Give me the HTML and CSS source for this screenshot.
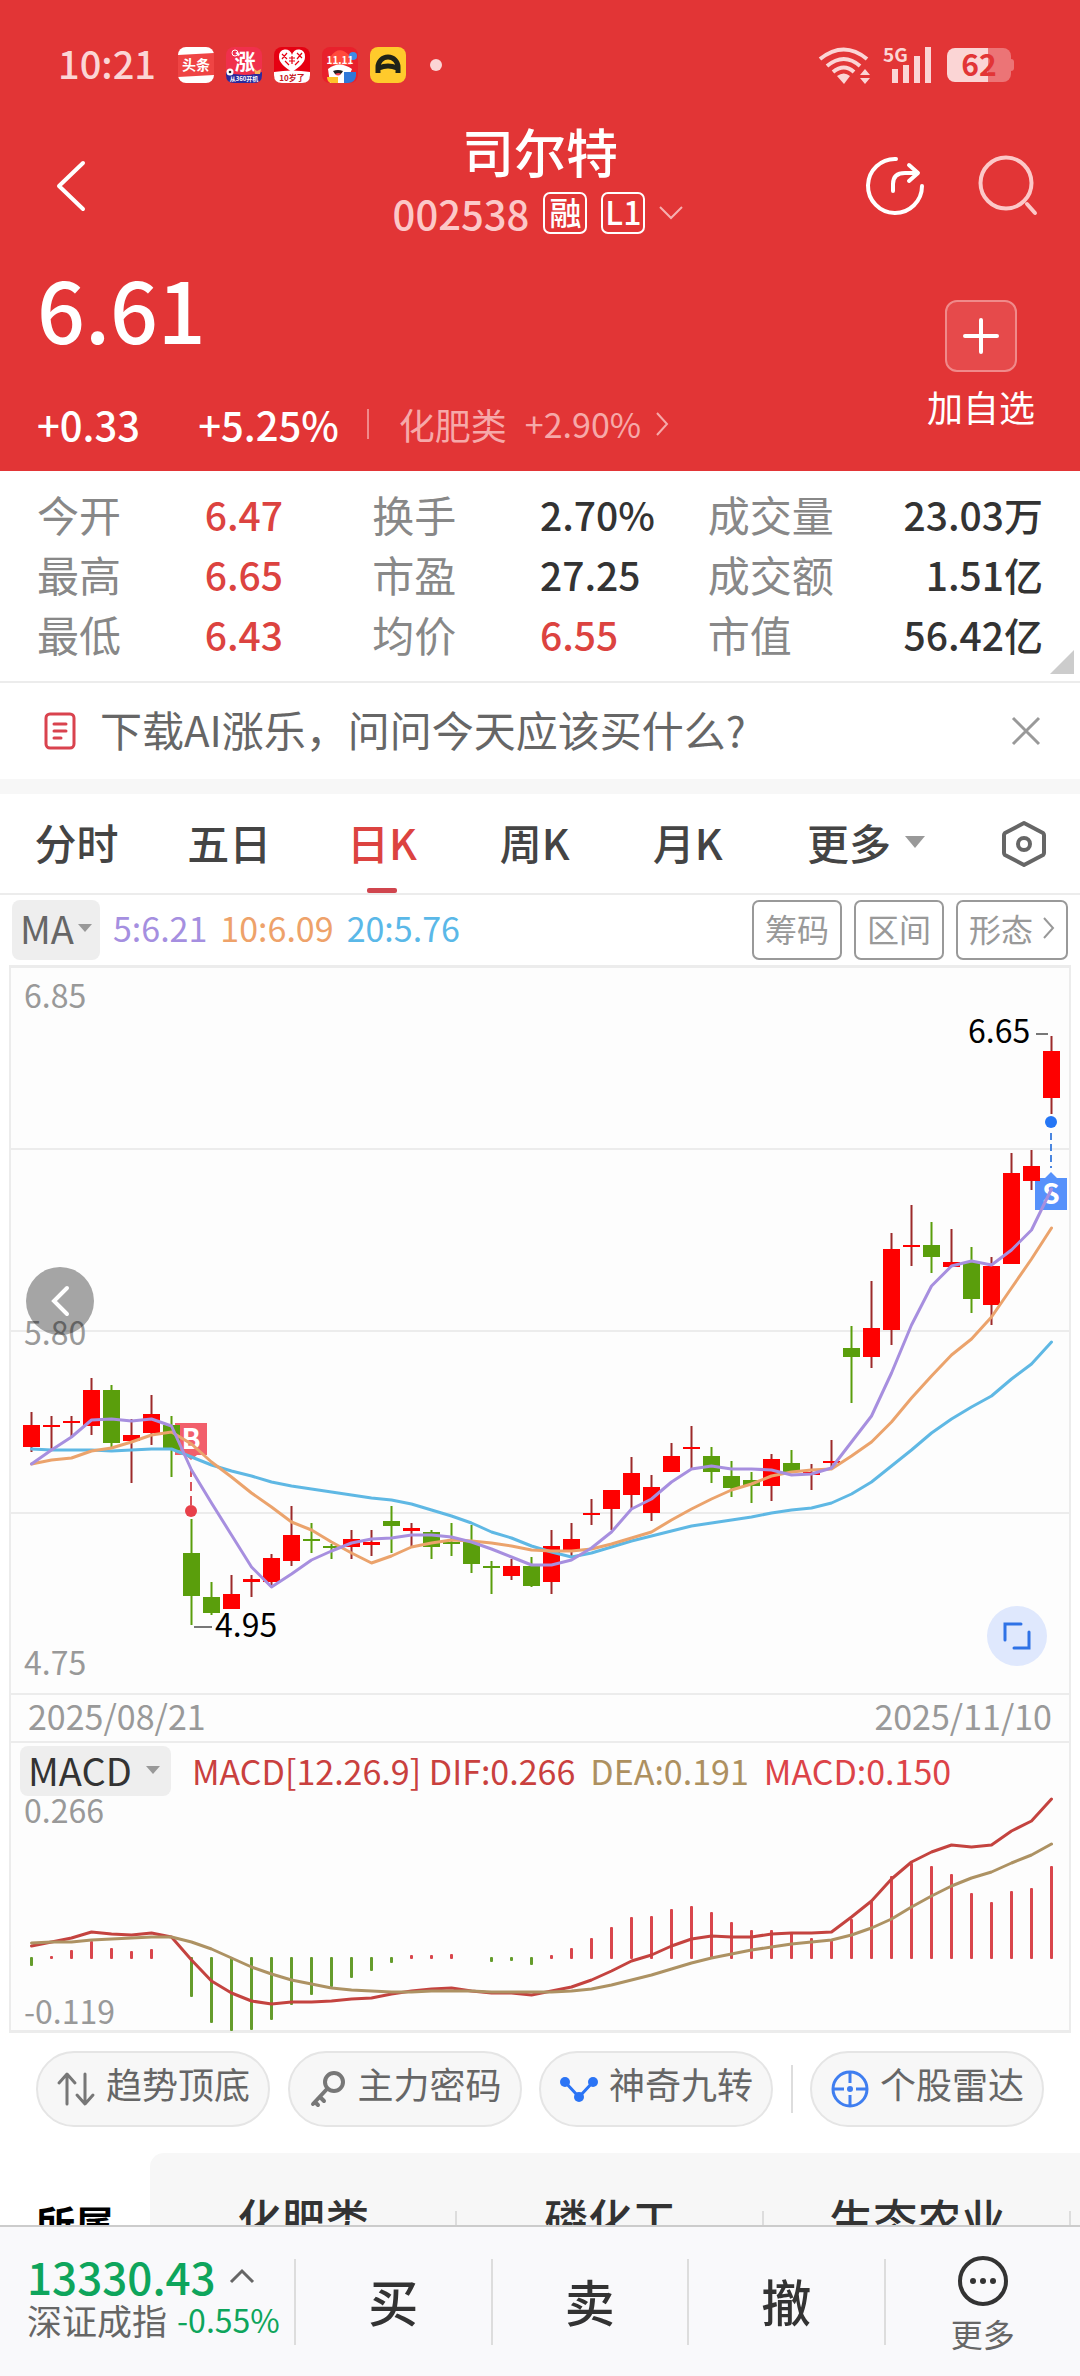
FILE: index.html
```html
<!DOCTYPE html>
<html lang="zh-CN">
<head>
    <meta charset="UTF-8">
    <meta name="viewport" content="width=device-width, initial-scale=1.0">
    <title>司尔特 002538</title>
    <link rel="stylesheet" href="styles.css">
</head>
<body>
    <div class="content">
        <header class="hero">
            <div class="status">
                <span class="time">10:21</span>
                <svg class="app" viewBox="0 0 36 36">
                    <rect width="36" height="36" rx="8" fill="#fff"/>
                    <path d="M0 8L36 6V28L0 30Z" fill="#ef4444"/>
                    <text x="18" y="23" font-size="14" font-weight="700" fill="#fff" text-anchor="middle">头条</text>
                </svg>
                <svg class="app" viewBox="0 0 36 36">
                    <rect width="36" height="36" rx="8" fill="#f0304c"/>
                    <path d="M0 25Q18 31 36 25V28Q36 36 28 36H8Q0 36 0 28Z" fill="#2b2a9c"/>
                    <text x="19" y="22" font-size="21" font-weight="700" fill="#fff" text-anchor="middle">涨</text>
                    <circle cx="9" cy="6" r="3" fill="none" stroke="#fff"/>
                    <circle cx="4" cy="25" r="3.500" fill="#fff"/>
                    <circle cx="4" cy="25" r="1.300" fill="#222"/>
                    <path d="M28 22l3 2 4-2-1 5h-5z" fill="#f8b25a"/>
                    <text x="18" y="34" font-size="6" font-weight="700" fill="#fff" text-anchor="middle">从360开机</text>
                </svg>
                <svg class="app" viewBox="0 0 36 36">
                    <rect width="36" height="36" rx="8" fill="#e60012"/>
                    <path d="M0 25Q18 22 36 25V28Q36 36 28 36H8Q0 36 0 28Z" fill="#fff"/>
                    <path d="M18 25C11 20 5 16 5 10a6 6 0 0 1 13-2a6 6 0 0 1 13 2C31 16 25 20 18 25Z" fill="#fff"/>
                    <path d="M8 7l5 5M13 6l-5 6M23 6l5 5M28 6l-5 6M11 14l4 4M25 14l-4 4M15 11h6M15 14h6M18 9v8" stroke="#e60012" stroke-width="1.200"/>
                    <text x="18" y="34" font-size="8" font-weight="700" fill="#c4151c" text-anchor="middle">10岁了</text>
                </svg>
                <svg class="app" viewBox="0 0 36 36">
                    <rect width="36" height="36" rx="8" fill="#e8202c"/>
                    <path d="M8 18L9 9Q17-2 27 8L29 18Z" fill="#ff4a3c"/>
                    <circle cx="31" cy="9" r="4" fill="#3f8be8"/>
                    <path d="M6 22Q17 13 30 22L24 36H8Z" fill="#fff"/>
                    <path d="M11 24q5-2 10 0q-3 6-8 3z" fill="#222"/>
                    <path d="M13 27q4-2 6 0q-3 3-6 0z" fill="#f04050"/>
                    <path d="M5 30h11v6H9q-4-1-4-6z" fill="#ffc329"/>
                    <path d="M22 25h12v4q-1 7-8 7h-4z" fill="#2f78d8"/>
                    <text x="18" y="17" font-size="10" font-weight="700" fill="#fff" text-anchor="middle">11.11</text>
                </svg>
                <svg class="app" viewBox="0 0 36 36">
                    <rect width="36" height="36" rx="8" fill="#ffca2c"/>
                    <path d="M8 26V20a10 10 0 0 1 20 0V26M9 21Q18 17 27 21" fill="none" stroke="#1f2318" stroke-width="5"/>
                </svg>
                <span class="dot"></span>
                <svg class="wifi" viewBox="0 0 50 37" fill="none" stroke="#fbd5d5" stroke-width="4">
                    <path d="M1 12Q25-7 48 12M8 19Q25 5 41 19M14 25Q25 16 35 25"/>
                    <path d="M18 29Q25 24 31 29L25 37ZM46 22l5 6H41ZM41 31h10l-5 6Z" fill="#fbd5d5" stroke="none"/>
                </svg>
                <svg class="signal" viewBox="0 0 50 38">
                    <text x="0" y="16" font-size="19" font-weight="700" fill="#fbd5d5">5G</text>
                    <path d="M9 23h6v14H9zM20 19h6v18h-6zM31 10h6v27h-6zM42 1h6v36h-6z" fill="#fbd5d5"/>
                </svg>
                <span class="battery"><b>62</b></span>
            </div>
            <nav class="nav">
                <button class="icon-btn back" aria-label="返回">
                    <svg width="28" height="50" viewBox="0 0 28 50" fill="none" stroke="#fff" stroke-width="4" stroke-linecap="round" stroke-linejoin="round"><path d="M26 2L2 25L26 48"/></svg>
                </button>
                <div class="name">
                    <h1>司尔特</h1>
                    <div class="code">
                        <span>002538</span>
                        <span class="tag">融</span>
                        <span class="tag">L1</span>
                        <svg width="24" height="14" viewBox="0 0 24 14" fill="none" stroke="#f6b0b0" stroke-width="2"><path d="M1 1L12 12L23 1"/></svg>
                    </div>
                </div>
                <div class="nav-right">
                    <button class="icon-btn" aria-label="分享">
                        <svg width="60" height="60" viewBox="0 0 60 60" fill="none" stroke="#fff" stroke-width="4" stroke-linecap="round" stroke-linejoin="round"><path d="M31 3A27 27 0 1 0 57 30M28 35V28Q28 17 40 17H52M44 9L53 17L44 25"/></svg>
                    </button>
                    <button class="icon-btn" aria-label="搜索">
                        <svg width="60" height="60" viewBox="0 0 60 60" fill="none" stroke="#fcc8c8" stroke-width="4" stroke-linecap="round"><circle cx="28" cy="27" r="25.500"/><path d="M49 48L57 57"/></svg>
                    </button>
                </div>
            </nav>
            <section class="quote">
                <div>
                    <p class="price">6.61</p>
                    <p class="change">
                        <span>+0.33</span>
                        <span class="pct">+5.25%</span>
                        <a class="sector" href="#">化肥类 <span>+2.90%</span>
                            <svg width="14" height="24" viewBox="0 0 14 24" fill="none" stroke="#f6a9a9" stroke-width="2"><path d="M2 1L12 12L2 23"/></svg>
                        </a>
                    </p>
                </div>
                <button class="add">
                    <span class="plus"><svg width="36" height="36" viewBox="0 0 36 36" stroke="#fff" stroke-width="4" stroke-linecap="round"><path d="M2 18H34M18 2V34"/></svg></span>
                    加自选
                </button>
            </section>
        </header>

        <dl class="stats">
            <dt>今开</dt><dd class="up">6.47</dd>
            <dt>换手</dt><dd>2.70%</dd>
            <dt>成交量</dt><dd class="right">23.03万</dd>
            <dt>最高</dt><dd class="up">6.65</dd>
            <dt>市盈</dt><dd>27.25</dd>
            <dt>成交额</dt><dd class="right">1.51亿</dd>
            <dt>最低</dt><dd class="up">6.43</dd>
            <dt>均价</dt><dd class="up">6.55</dd>
            <dt>市值</dt><dd class="right">56.42亿</dd>
        </dl>

        <div class="notice">
            <svg width="32" height="38" viewBox="0 0 32 38" fill="none" stroke="#d9434e" stroke-width="3" stroke-linecap="round"><rect x="2" y="2" width="28" height="34" rx="4"/><path d="M10 12H22M10 19H22M10 26H17"/></svg>
            <p>下载AI涨乐，问问今天应该买什么?</p>
            <button class="icon-btn" aria-label="关闭">
                <svg width="28" height="28" viewBox="0 0 28 28" stroke="#999" stroke-width="3"><path d="M1 1L27 27M27 1L1 27"/></svg>
            </button>
        </div>

        <nav class="tabs">
            <button>分时</button>
            <button>五日</button>
            <button class="active">日K</button>
            <button>周K</button>
            <button>月K</button>
            <button class="more">更多 <i class="caret"></i></button>
            <button class="setting" aria-label="设置">
                <svg width="46" height="48" viewBox="0 0 46 48" fill="none" stroke="#666" stroke-width="4" stroke-linejoin="round"><path d="M23 3L42 13Q43 14 43 15V33Q43 34 42 35L23 45L4 35Q3 34 3 33V15Q3 14 4 13Z"/><circle cx="23" cy="24" r="6"/></svg>
            </button>
        </nav>

        <div class="ma">
            <button class="pick">MA<i class="caret"></i></button>
            <span class="ma5">5:6.21</span>
            <span class="ma10">10:6.09</span>
            <span class="ma20">20:5.76</span>
            <div class="tools">
                <button>筹码</button>
                <button>区间</button>
                <button>形态 <svg width="12" height="24" viewBox="0 0 12 24" fill="none" stroke="#999" stroke-width="2"><path d="M1 2L10 12L1 22"/></svg></button>
            </div>
        </div>

        <section class="chart">
            <div class="kline">
                <svg id="kline" viewBox="11 968 1058 725">
                    <path d="M11 1149H1069M11 1331H1069M11 1513H1069" stroke="#ececec" stroke-width="2"/>
                    <g class="axis">
                        <text x="24" y="1008">6.85</text>
                        <text x="24" y="1345">5.80</text>
                        <text x="24" y="1675">4.75</text>
                    </g>
                    <path d="M175 1423H207V1455H197L191 1460L185 1455H175Z" fill="#f25f6c"/>
                    <text class="mark" x="191" y="1449">B</text>
                    <path d="M191 1468V1505" stroke="#d9545c" stroke-width="2" stroke-dasharray="9 5"/>
                    <circle cx="191" cy="1511" r="6" fill="#e8404a"/>
                    <path d="M1035 1178H1045L1051 1172L1057 1178H1067V1210H1035Z" fill="#5691fb"/>
                    <text class="mark" x="1051" y="1204">S</text>
                    <path d="M1051 1133V1168" stroke="#4a86e0" stroke-width="2" stroke-dasharray="7 4"/>
                    <circle cx="1051" cy="1122" r="6" fill="#2576f5"/>
                    <path d="M194 1627H212M1036 1034H1048" stroke="#777" stroke-width="2"/>
                    <text class="peak" x="215" y="1637">4.95</text>
                    <text class="peak" x="968" y="1043">6.65</text>
                </svg>
                <button class="prev" aria-label="向前">
                    <svg width="18" height="30" viewBox="0 0 18 30" fill="none" stroke="#fff" stroke-width="4" stroke-linecap="round"><path d="M16 2L3 15L16 28"/></svg>
                </button>
                <button class="full" aria-label="全屏">
                    <svg width="28" height="28" viewBox="0 0 28 28" fill="none" stroke="#2f72e6" stroke-width="3" stroke-linecap="round"><path d="M2 18V2H18M26 10V26H11"/></svg>
                </button>
            </div>
            <div class="dates"><span>2025/08/21</span><span>2025/11/10</span></div>
            <div class="macd-head">
                <button class="pick">MACD <i class="caret"></i></button>
                <span class="dif">MACD[12.26.9] DIF:0.266</span>
                <span class="dea">DEA:0.191</span>
                <span class="bar">MACD:0.150</span>
            </div>
            <svg id="macd" viewBox="11 1798 1058 232">
                <g class="axis">
                    <text x="24" y="1823">0.266</text>
                    <text x="24" y="2024">-0.119</text>
                </g>
            </svg>
        </section>

        <div class="pills">
            <button>
                <svg width="38" height="38" viewBox="0 0 38 38" fill="none" stroke="#777" stroke-width="3" stroke-linecap="round" stroke-linejoin="round"><path d="M10 34V5M2 13L10 4L18 13M28 4V33M20 25L28 34L36 25"/></svg>
                <span>趋势顶底</span>
            </button>
            <button>
                <svg width="38" height="38" viewBox="0 0 38 38" fill="none" stroke="#777" stroke-width="4" stroke-linecap="round"><circle cx="25" cy="12" r="9"/><path d="M18 19L4 34M11 27L15 31M6 32L9 35"/></svg>
                <span>主力密码</span>
            </button>
            <button>
                <svg width="38" height="38" viewBox="0 0 38 38" fill="none" stroke="#2b74f5" stroke-width="3"><path d="M5 12L19 27L33 12"/><g fill="#2b74f5" stroke="none"><circle cx="5" cy="12" r="5"/><circle cx="33" cy="12" r="5"/><circle cx="19" cy="27" r="5"/></g></svg>
                <span>神奇九转</span>
            </button>
            <i class="split"></i>
            <button>
                <svg width="38" height="38" viewBox="0 0 38 38" fill="none" stroke="#3f7ef0" stroke-width="3"><circle cx="19" cy="19" r="17"/><path d="M19 2V13M19 25V36M2 19H13M25 19H36"/><circle cx="19" cy="19" r="3" fill="#3f7ef0" stroke="none"/></svg>
                <span>个股雷达</span>
            </button>
        </div>

        <section class="belong">
            <h2>所属</h2>
            <ul>
                <li>化肥类</li>
                <li>磷化工</li>
                <li>生态农业</li>
            </ul>
        </section>
    </div>

    <footer class="bottom">
        <div class="index">
            <p class="point">13330.43 <svg width="24" height="14" viewBox="0 0 24 14" fill="none" stroke="#666" stroke-width="3"><path d="M1 13L12 2L23 13"/></svg></p>
            <p class="idx-name">深证成指 <span>-0.55%</span></p>
        </div>
        <button>买</button>
        <button>卖</button>
        <button>撤</button>
        <button class="more">
            <svg width="52" height="52" viewBox="0 0 52 52" fill="none" stroke="#333" stroke-width="4"><circle cx="26" cy="26" r="23"/><g fill="#333" stroke="none"><circle cx="16" cy="26" r="3"/><circle cx="26" cy="26" r="3"/><circle cx="36" cy="26" r="3"/></g></svg>
            更多
        </button>
    </footer>

    <script src="chart.js"></script>
</body>
</html>
```
FILE: styles.css
```css
:root{
    --red: #e23536;
    --up: #dc4340;
    --green: #0ea55c;
    --line: #ececec;
    --grey: #999;
}
*,*::before,*::after{
    box-sizing: border-box;
    margin: 0;
    padding: 0;
}
body{
    height: 100vh;
    display: flex;
    flex-direction: column;
    background-color: #fff;
    color: #333;
    font-family: "Noto Sans CJK SC", "Noto Sans", sans-serif;
    font-size: 40px;
    line-height: 1;
}
button{
    border: none;
    background: none;
    color: inherit;
    font: inherit;
    cursor: pointer;
}
svg{
    display: block;
    flex: none;
    overflow: visible;
}
a{
    color: inherit;
    text-decoration: none;
}
.content{
    flex: 1;
    min-height: 0;
    overflow-y: auto;
    scrollbar-width: none;
}
.icon-btn{
    display: flex;
}
.caret{
    border: 10px solid transparent;
    border-top: 12px solid var(--grey);
    border-bottom: none;
}

/* header */
.hero{
    background-color: var(--red);
    color: #fff;
}
.status{
    height: 130px;
    padding: 0 69px 0 58px;
    display: flex;
    align-items: center;
    gap: 12px;
    color: #fbd5d5;
}
.time{
    font-size: 38px;
    font-weight: 500;
    margin-right: 10px;
    padding-bottom: 4px;
}
.app{
    width: 36px;
    height: 36px;
}
.dot{
    width: 12px;
    height: 12px;
    margin-left: 12px;
    border-radius: 50%;
    background-color: #fbd5d5;
}
.wifi{
    width: 50px;
    height: 37px;
    margin-left: auto;
}
.signal{
    width: 50px;
    height: 38px;
    margin-left: 2px;
}
.battery{
    position: relative;
    width: 64px;
    height: 34px;
    margin-left: 2px;
    border-radius: 8px;
    background: linear-gradient(90deg, #fbd5d5 64%, #ec7476 64%);
    color: var(--red);
    font-size: 30px;
    line-height: 30px;
    text-align: center;
}
.battery::after{
    content: "";
    position: absolute;
    right: -3px;
    top: 11px;
    width: 3px;
    height: 12px;
    border-radius: 0 3px 3px 0;
    background-color: #ec7476;
}
.nav{
    height: 112px;
    padding: 0 42px;
    display: grid;
    grid-template-columns: 1fr auto 1fr;
    align-items: center;
}
.back{
    margin-left: 15px;
}
.name{
    display: flex;
    flex-direction: column;
    align-items: center;
    gap: 20px;
    padding-bottom: 8px;
}
.name h1{
    font-size: 52px;
    font-weight: 500;
    line-height: 42px;
}
.code{
    display: flex;
    align-items: center;
    gap: 14px;
    padding-right: 4px;
    line-height: 40px;
    font-weight: 500;
    color: #fcc8c8;
}
.tag{
    width: 44px;
    height: 42px;
    border: 2px solid #fff;
    border-radius: 7px;
    color: #fff;
    font-size: 32px;
    line-height: 34px;
    text-align: center;
}
.nav-right{
    display: flex;
    justify-content: flex-end;
    gap: 53px;
}
.quote{
    padding: 18px 45px 22px 37px;
    display: flex;
    justify-content: space-between;
    align-items: center;
}
.price{
    font-size: 84px;
    font-weight: 500;
    line-height: 96px;
    margin-bottom: 43px;
}
.change{
    display: flex;
    align-items: center;
    line-height: 50px;
    font-size: 40px;
    font-weight: 500;
}
.pct{
    margin: 0 28px 0 58px;
}
.sector{
    display: flex;
    align-items: center;
    gap: 14px;
    padding-left: 30px;
    color: #f6a9a9;
    font-size: 36px;
    font-weight: 400;
    line-height: 30px;
    border-left: 2px solid #f08a8a;
}
.sector span{
    margin-left: 4px;
    font-size: 34px;
}
.add{
    display: flex;
    flex-direction: column;
    align-items: center;
    gap: 12px;
    padding-top: 18px;
    font-size: 36px;
    line-height: 44px;
}
.plus{
    width: 72px;
    height: 72px;
    display: grid;
    place-items: center;
    border: 2px solid #f08a8a;
    border-radius: 12px;
    background-color: #e64a4b;
}

/* figures */
.stats{
    position: relative;
    height: 212px;
    padding: 13px 37px 0;
    display: grid;
    grid-template-columns: repeat(6, 1fr);
    align-content: start;
    line-height: 60px;
    border-bottom: 2px solid var(--line);
    white-space: nowrap;
}
.stats::after{
    content: "";
    position: absolute;
    right: 6px;
    bottom: 7px;
    border-left: 24px solid transparent;
    border-bottom: 24px solid #ccc;
}
.stats dt{
    font-size: 42px;
    color: #888;
}
.stats dd{
    font-size: 39px;
    font-weight: 500;
}
.up{
    color: var(--up);
}
.right{
    text-align: right;
}
.notice{
    height: 96px;
    padding: 0 40px 0 44px;
    display: flex;
    align-items: center;
}
.notice p{
    flex: 1;
    margin-left: 24px;
    padding-bottom: 4px;
    font-size: 42px;
    color: #666;
}

/* period tabs */
.tabs{
    display: flex;
    height: 116px;
    border-top: 15px solid #f7f7f7;
    border-bottom: 2px solid var(--line);
    font-size: 42px;
}
.tabs button{
    position: relative;
    flex: 1;
    padding-bottom: 4px;
    font-weight: 500;
    color: #444;
}
.tabs .active{
    color: var(--up);
}
.tabs .active::after{
    content: "";
    position: absolute;
    left: 50%;
    bottom: 0;
    width: 30px;
    height: 5px;
    margin-left: -15px;
    border-radius: 2px;
    background-color: #d0454e;
}
.tabs .more{
    flex: 0 0 204px;
    display: flex;
    align-items: center;
    justify-content: center;
    gap: 14px;
}
.tabs .setting{
    flex: 0 0 112px;
    padding: 0;
    display: grid;
    place-items: center;
}
.ma{
    height: 70px;
    padding: 0 12px;
    display: flex;
    align-items: center;
    gap: 13px;
    font-size: 34px;
    white-space: nowrap;
}
.ma span{
    padding-bottom: 4px;
}
.pick{
    display: flex;
    align-items: center;
    border-radius: 8px;
    background-color: #eee;
    font-size: 38px;
}
.pick .caret{
    border-width: 8px 7px 0;
}
.ma .pick{
    height: 60px;
    padding: 0 8px 4px;
    gap: 4px;
    color: #666;
}
.ma5{ color: #a58fe0; }
.ma10{ color: #eea26a; }
.ma20{ color: #5ab8e8; }
.tools{
    margin-left: auto;
    display: flex;
    gap: 12px;
}
.tools button{
    height: 60px;
    padding: 0 11px 4px;
    display: flex;
    align-items: center;
    gap: 10px;
    border: 2px solid var(--grey);
    border-radius: 7px;
    color: var(--grey);
    font-size: 32px;
}

/* charts */
.chart{
    margin: 0 9px;
    border: 2px solid var(--line);
    border-width: 3px 2px;
    background-color: #fdfdfd;
}
.chart > svg,.kline > svg{
    width: 100%;
    height: auto;
}
.kline{
    position: relative;
}
.prev,.full{
    position: absolute;
    display: grid;
    place-items: center;
    border-radius: 50%;
}
.prev{
    left: 15px;
    top: 299px;
    width: 68px;
    height: 68px;
    background-color: rgba(0, 0, 0, 0.35);
}
.full{
    right: 22px;
    bottom: 27px;
    width: 60px;
    height: 60px;
    background-color: #dfe8fd;
}
.axis{
    font-size: 32px;
    fill: var(--grey);
}
.peak{
    font-size: 32px;
    fill: #000;
}
.mark{
    font-size: 28px;
    font-weight: 700;
    fill: #fff;
    text-anchor: middle;
}
.curve{
    fill: none;
    stroke-width: 3;
    stroke-linejoin: round;
    stroke-linecap: round;
}
.dates{
    height: 50px;
    padding: 0 17px 4px;
    display: flex;
    justify-content: space-between;
    align-items: center;
    border: solid var(--line);
    border-width: 2px 0;
    color: var(--grey);
    font-size: 34px;
}
.macd-head{
    height: 55px;
    padding-left: 9px;
    display: flex;
    align-items: center;
    gap: 15px;
    font-size: 34px;
    white-space: nowrap;
}
.macd-head .pick{
    height: 50px;
    margin-right: 6px;
    padding: 0 11px 2px 8px;
    gap: 14px;
}
.dif{ color: #c9403e; }
.dea{ color: #ad9060; }
.bar{ color: #dc4348; }

/* shortcuts */
.pills{
    padding: 18px 36px 26px;
    display: flex;
    justify-content: space-between;
    align-items: center;
}
.pills button{
    height: 76px;
    padding: 0 18px 0 19px;
    display: flex;
    align-items: center;
    gap: 11px;
    border: 2px solid #e5e5e5;
    border-radius: 38px;
    background-color: #f7f7f7;
    color: #666;
    font-size: 36px;
}
.pills span{
    padding-bottom: 12px;
}
.split{
    width: 2px;
    height: 48px;
    background-color: #ddd;
}
.belong{
    display: flex;
}
.belong h2{
    width: 150px;
    flex: none;
    padding: 47px 0 0 36px;
    font-size: 39px;
    line-height: 44px;
    color: #000;
}
.belong ul{
    flex: 1;
    height: 150px;
    padding-top: 43px;
    display: flex;
    list-style: none;
    background-color: #f7f7f7;
    border-radius: 14px 0 0 0;
}
.belong li{
    position: relative;
    width: 33%;
    font-size: 44px;
    font-weight: 500;
    line-height: 44px;
    text-align: center;
}
.belong li::after{
    content: "";
    position: absolute;
    right: 0;
    top: 15px;
    width: 2px;
    height: 34px;
    background-color: #ddd;
}

/* trade bar */
.bottom{
    flex: none;
    padding: 32px 0 31px;
    display: flex;
    border-top: 2px solid #ccc;
    background-color: #f9f9fb;
}
.index{
    width: 294px;
    padding-left: 27px;
    white-space: nowrap;
}
.point{
    display: flex;
    align-items: center;
    gap: 14px;
    height: 34px;
    color: var(--green);
    font-size: 44px;
    font-weight: 500;
}
.idx-name{
    display: flex;
    align-items: center;
    gap: 10px;
    height: 52px;
    font-size: 35px;
    color: #666;
}
.idx-name span{
    color: var(--green);
    font-size: 32px;
}
.bottom button{
    flex: 1;
    height: 86px;
    padding-bottom: 4px;
    border-left: 2px solid #ddd;
    font-size: 50px;
    font-weight: 500;
}
.bottom .more{
    padding: 0;
    display: flex;
    flex-direction: column;
    align-items: center;
    justify-content: center;
    gap: 10px;
    font-size: 32px;
    font-weight: 400;
    color: #666;
}
```
FILE: chart.js
```js
const first = 31.5;
const step = 20;

// high, body top, body bottom, low, 1 = up / 0 = down
const candles = [
    [1412,1425,1447,1452,1],[1416,1425,1427,1450,1],[1416,1421,1423,1437,1],[1378,1390,1426,1435,1],
    [1385,1390,1443,1447,0],[1419,1435,1441,1483,1],[1395,1414,1433,1445,1],[1416,1425,1450,1477,0],
    [1519,1553,1596,1625,0],[1582,1597,1613,1615,0],[1575,1594,1609,1609,1],[1575,1579,1582,1597,1],
    [1554,1558,1582,1586,1],[1506,1535,1561,1566,1],[1523,1539,1541,1553,0],[1544,1546,1548,1559,0],
    [1530,1539,1547,1559,1],[1530,1542,1545,1556,1],[1506,1521,1526,1553,0],[1523,1528,1531,1546,1],
    [1530,1532,1547,1559,0],[1523,1542,1544,1556,0],[1525,1542,1564,1573,0],[1561,1566,1568,1594,0],
    [1559,1566,1576,1580,1],[1557,1566,1586,1587,0],[1530,1546,1582,1594,1],[1523,1539,1550,1556,1],
    [1499,1513,1515,1525,1],[1490,1490,1509,1530,1],[1457,1473,1495,1508,1],[1475,1487,1513,1521,1],
    [1443,1456,1472,1472,1],[1426,1447,1449,1468,1],[1447,1456,1472,1483,0],[1461,1476,1488,1497,0],
    [1472,1480,1486,1503,0],[1454,1459,1486,1501,1],[1450,1463,1472,1472,0],[1464,1472,1475,1490,1],
    [1440,1461,1463,1468,1],[1326,1348,1357,1403,0],[1281,1328,1357,1368,1],[1233,1249,1330,1345,1],
    [1205,1245,1247,1266,1],[1222,1245,1257,1273,0],[1229,1262,1267,1267,1],[1247,1262,1299,1313,0],
    [1257,1266,1305,1325,1],[1153,1173,1264,1264,1],[1150,1166,1181,1190,1],[1036,1051,1098,1114,1]
];
const ma5 = [1464,1450,1437,1420,1419,1421,1419,1426,1470,1503,1535,1567,1587,1574,1560,1551,1543,1539,1538,1535,1535,1537,1542,1549,1557,1565,1565,1560,1548,1532,1509,1499,1482,1469,1466,1469,1469,1470,1475,1474,1468,1442,1416,1373,1325,1286,1266,1261,1265,1250,1230,1189];
const ma10 = [1464,1460,1458,1451,1448,1442,1435,1432,1444,1462,1477,1493,1507,1522,1530,1542,1553,1563,1556,1547,1543,1540,1541,1543,1546,1550,1551,1551,1549,1544,1538,1532,1520,1509,1499,1490,1484,1476,1472,1470,1469,1456,1442,1422,1398,1376,1355,1339,1317,1288,1259,1228];
const ma20 = [1449,1450,1450,1450,1451,1450,1449,1449,1457,1465,1471,1476,1482,1486,1489,1492,1495,1498,1500,1504,1510,1516,1523,1532,1538,1546,1552,1557,1553,1547,1541,1536,1531,1526,1523,1520,1517,1513,1510,1508,1503,1494,1482,1466,1450,1433,1419,1407,1396,1379,1364,1342];

const zero = 1958;
const hist = [1966,1956,1950,1941,1948,1951,1949,1958,1997,2023,2031,2030,2020,2005,1995,1987,1978,1971,1963,1955,1955,1954,1958,1962,1961,1965,1955,1948,1938,1927,1917,1916,1909,1906,1912,1922,1930,1930,1933,1938,1940,1919,1901,1876,1863,1866,1874,1893,1902,1891,1888,1866];
const dif = [1946,1942,1938,1932,1934,1935,1933,1937,1960,1981,1993,2001,2004,2002,2002,2001,1999,1998,1994,1991,1989,1988,1991,1993,1993,1995,1991,1987,1980,1971,1961,1955,1946,1939,1936,1937,1937,1934,1933,1933,1932,1917,1901,1879,1862,1852,1845,1847,1845,1831,1821,1799];
const dea = [1943,1942,1942,1940,1939,1938,1937,1937,1942,1949,1958,1967,1974,1980,1984,1988,1990,1991,1992,1992,1991,1991,1991,1992,1992,1992,1992,1991,1989,1985,1980,1975,1969,1963,1958,1954,1950,1947,1944,1942,1940,1935,1928,1919,1907,1896,1886,1878,1872,1863,1855,1844];

const kline = document.querySelector('#kline');
const macd = document.querySelector('#macd');

function add(parent, tag, attrs){
    const el = document.createElementNS('http://www.w3.org/2000/svg', tag);
    for (const key in attrs) {
        el.setAttribute(key, attrs[key]);
    }
    parent.appendChild(el);
}

function curve(parent, values, color){
    const points = values.map((y, i) => `${first + i * step},${y}`).join(' ');
    add(parent, 'polyline', {points, stroke: color, class: 'curve'});
}

candles.forEach(([high, top, bottom, low, up], i) => {
    const x = first + i * step;
    add(kline, 'rect', {x: x - 1, y: high, width: 2, height: low - high, fill: up ? '#9c2a2a' : '#5a9e0c'});
    add(kline, 'rect', {x: x - 8.5, y: top, width: 17, height: bottom - top, fill: up ? '#fe0000' : '#5a9e0c'});
});
curve(kline, ma20, '#5fb8e4');
curve(kline, ma10, '#eba36c');
curve(kline, ma5, '#a78fdf');

hist.forEach((y, i) => {
    if (y === zero) return;
    const top = Math.min(y, zero - 1);
    const bottom = Math.max(y, zero + 1);
    add(macd, 'rect', {x: first + i * step - 1.5, y: top, width: 3, height: bottom - top, rx: 1, fill: y > zero ? '#659c2c' : '#d9464c'});
});
curve(macd, dif, '#c4433f');
curve(macd, dea, '#ad9263');
```
